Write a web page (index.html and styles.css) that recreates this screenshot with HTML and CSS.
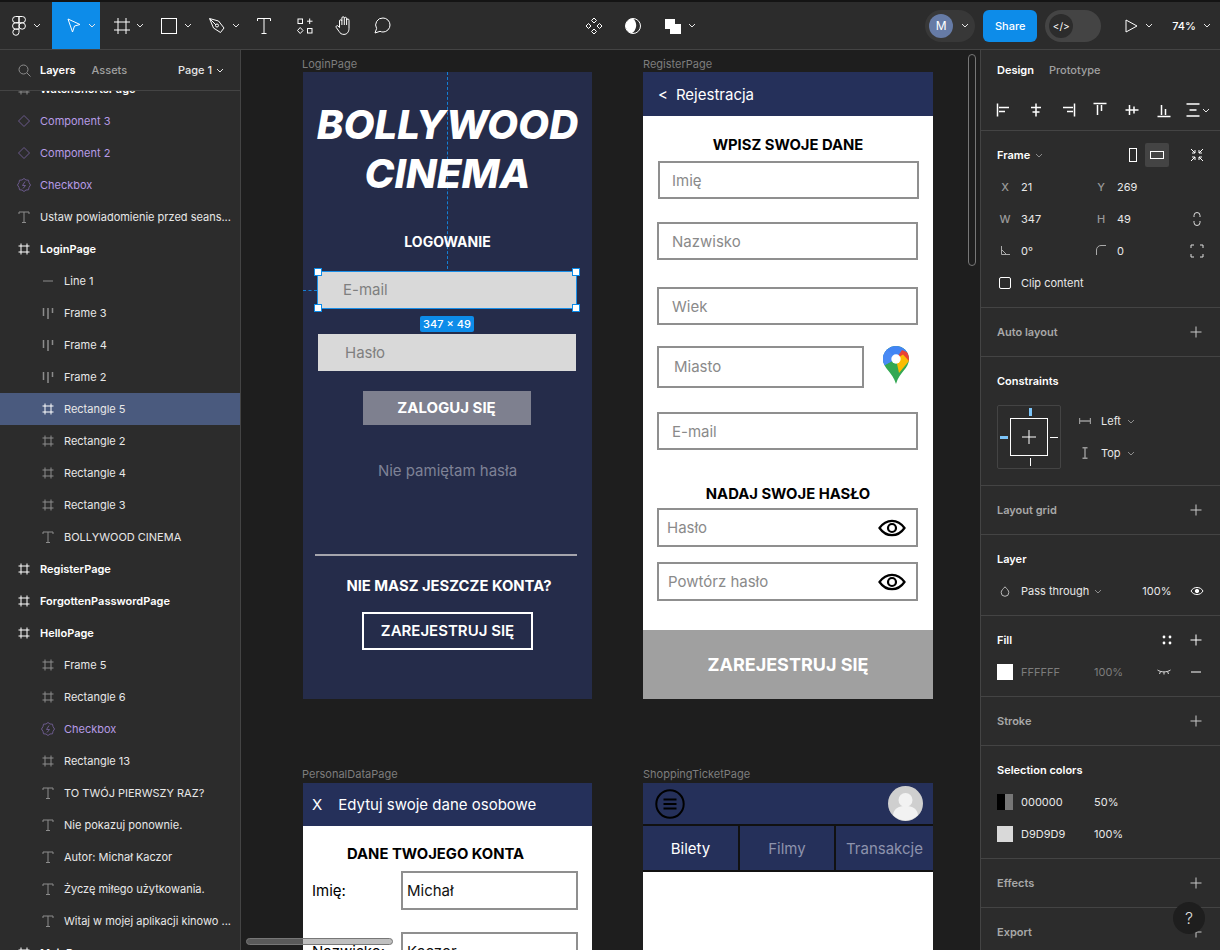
FILE: index.html
```html
<!DOCTYPE html>
<html lang="en">
<head>
    <meta charset="UTF-8">
    <title>Bollywood Cinema</title>
    <link rel="stylesheet" href="styles.css">
</head>
<body>
<svg class="sprite" xmlns="http://www.w3.org/2000/svg">
    <symbol id="chev" viewBox="0 0 8 5"><path d="M1 1l3 3 3-3" fill="none" stroke="currentColor"/></symbol>
    <symbol id="hash" viewBox="0 0 16 16"><path d="M5 2.5v11M11 2.5v11M2.5 5h11M2.5 11h11" fill="none" stroke="currentColor"/></symbol>
    <symbol id="text" viewBox="0 0 16 16"><path d="M3 5V3h10v2M8 3v10.5M6 13.5h4" fill="none" stroke="currentColor"/></symbol>
    <symbol id="comp" viewBox="0 0 16 16"><path d="M8 2.5L13.5 8 8 13.500 2.500 8z" fill="none" stroke="currentColor"/></symbol>
    <symbol id="inst" viewBox="0 0 16 16"><path d="M8 1.500l2 1.500 2.500.2.500 2.400 1.500 2.400-1.500 2.400-.5 2.400-2.500.2-2 1.500-2-1.500-2.500-.2-.5-2.400L1.500 8 3 5.600l.5-2.400L6 3z" fill="none" stroke="currentColor"/><path d="M9 4.500L6.500 8.500h3L7 11.500" fill="none" stroke="currentColor"/></symbol>
    <symbol id="line" viewBox="0 0 16 16"><path d="M3 8h10" stroke="currentColor" stroke-width="1"/></symbol>
    <symbol id="bars" viewBox="0 0 16 16"><path d="M3.500 3v8M8 3v11M12.500 3v5" stroke="currentColor" stroke-width="1.500"/></symbol>
    <symbol id="plus" viewBox="0 0 16 16"><path d="M8 2.500v11M2.500 8h11" stroke="currentColor"/></symbol>
    <symbol id="eye" viewBox="0 0 28 18"><path d="M1.500 9C5 4 9 1.800 14 1.800S23 4 26.500 9C23 14 19 16.200 14 16.200S5 14 1.500 9z" fill="none" stroke="#000" stroke-width="2.200"/><circle cx="14" cy="9" r="4" fill="none" stroke="#000" stroke-width="2.200"/></symbol>
</svg>

<div class="app">
    <header class="toolbar">
        <div class="tool tool-logo">
            <svg width="14" height="20" viewBox="0 0 14 20" fill="none" stroke="#fff"><path d="M7 .5H3.700a3 3 0 0 0 0 6.300H7zM7 .5h3.300a3 3 0 0 1 0 6.300H7zM7 6.800H3.700a3.100 3.100 0 0 0 0 6.300H7zM7 13.100H3.700A3.100 3.100 0 1 0 7 16.300z"/><circle cx="10.200" cy="10" r="3.200"/></svg>
            <svg class="chev"><use href="#chev"/></svg>
        </div>
        <div class="tool tool-active">
            <svg width="14" height="15" viewBox="0 0 14 15" fill="none" stroke="#fff"><path d="M1 1l12 5.500-5.500 1.500L5.500 14z"/></svg>
            <svg class="chev"><use href="#chev"/></svg>
        </div>
        <div class="tool">
            <svg width="16" height="16" viewBox="0 0 16 16" fill="none" stroke="#fff"><path d="M4 0v16M12 0v16M0 4h16M0 12h16"/></svg>
            <svg class="chev"><use href="#chev"/></svg>
        </div>
        <div class="tool tool-wide">
            <svg width="16" height="16" viewBox="0 0 16 16" fill="none" stroke="#fff"><rect x=".5" y=".5" width="15" height="15"/></svg>
            <svg class="chev"><use href="#chev"/></svg>
        </div>
        <div class="tool tool-wide">
            <svg width="16" height="16" viewBox="0 0 16 16" fill="none" stroke="#fff"><path d="M.5.500l9 2.500 5.500 7-3.500 4.500-7-4.500zM1 1l6 6"/><circle cx="8" cy="7.500" r="1.500"/></svg>
            <svg class="chev"><use href="#chev"/></svg>
        </div>
        <div class="tool tool-plain tool-t">
            <svg width="14" height="16" viewBox="0 0 14 16" fill="none" stroke="#fff"><path d="M.5 3V.5h13V3M7 .5v15M4.500 15.500h5"/></svg>
        </div>
        <div class="tool tool-plain">
            <svg width="16" height="16" viewBox="0 0 16 16" fill="none" stroke="#fff"><rect x="1" y="1" width="4.500" height="4.500"/><rect x="10.500" y="10.500" width="4.500" height="4.500"/><path d="M3.200 9.500l2.800 3-2.800 3-2.700-3zM12.700 .5v5.500M10 3.200h5.500"/></svg>
        </div>
        <div class="tool tool-plain">
            <svg width="18" height="19" viewBox="0 0 18 19" fill="none" stroke="#fff"><path d="M4.500 11.500V5a1.200 1.200 0 0 1 2.400 0V2a1.200 1.200 0 0 1 2.400 0v0a1.200 1.200 0 0 1 2.300.5V4a1.200 1.200 0 0 1 2.400.4v8c0 3.500-2 6-5 6-2.500 0-3.800-1-5-3l-2.800-4a1.200 1.200 0 0 1 1.800-1.500zM6.900 5v4M9.300 2v7M11.600 2.500V9"/></svg>
        </div>
        <div class="tool tool-plain">
            <svg width="17" height="17" viewBox="0 0 17 17" fill="none" stroke="#fff"><path d="M9 1a7 7 0 0 1 0 14 7 7 0 0 1-3-.7L1 16l1.600-4.500A7 7 0 0 1 9 1z"/></svg>
        </div>

        <div class="center-tools">
            <svg width="18" height="18" viewBox="0 0 18 18" fill="none" stroke="#fff"><path d="M9 1l2.500 2.500L9 6 6.500 3.500zM9 12l2.500 2.500L9 17l-2.500-2.500zM3.500 6.500L6 9l-2.500 2.500L1 9zM14.500 6.500L17 9l-2.500 2.500L12 9z"/></svg>
            <svg width="16" height="16" viewBox="0 0 16 16"><circle cx="8" cy="8" r="7.500" fill="none" stroke="#fff"/><path d="M8 .5a7.500 7.500 0 0 0-1.500 14.800A9 9 0 0 0 8 .5z" fill="#fff"/></svg>
            <div class="swatches">
                <svg width="16" height="16" viewBox="0 0 16 16" fill="#fff"><path d="M0 1h10v5h6v10H5v-5H0z"/></svg>
                <svg class="chev"><use href="#chev"/></svg>
            </div>
        </div>

        <div class="right-tools">
            <div class="user-pill"><span class="avatar">M</span><svg class="chev"><use href="#chev"/></svg></div>
            <button class="share">Share</button>
            <div class="dev-toggle"><span class="dev-knob">&lt;/&gt;</span></div>
            <div class="play">
                <svg width="13" height="14" viewBox="0 0 13 14" fill="none" stroke="#fff"><path d="M1 1l11 6-11 6z"/></svg>
                <svg class="chev"><use href="#chev"/></svg>
            </div>
            <div class="zoom-val">74%<svg class="chev"><use href="#chev"/></svg></div>
        </div>
    </header>

    <div class="main">
        <aside class="layers">
            <div class="layers-head">
                <svg class="search" width="13" height="13" viewBox="0 0 13 13" fill="none" stroke="#8c8c8c"><circle cx="5.500" cy="5.500" r="4.500"/><path d="M9 9l3.500 3.500"/></svg>
                <span class="tab-on">Layers</span>
                <span class="tab-off">Assets</span>
                <span class="page-name">Page 1<svg class="chev"><use href="#chev"/></svg></span>
            </div>
            <div class="layer-list">
                <div class="layer layer-first strong"><svg><use href="#hash"/></svg>WatchShortsPage</div>
                <div class="layer purple"><svg><use href="#comp"/></svg>Component 3</div>
                <div class="layer purple"><svg><use href="#comp"/></svg>Component 2</div>
                <div class="layer purple"><svg><use href="#inst"/></svg>Checkbox</div>
                <div class="layer"><svg><use href="#text"/></svg>Ustaw powiadomienie przed seans...</div>
                <div class="layer strong"><svg class="white"><use href="#hash"/></svg>LoginPage</div>
                <div class="layer sub"><svg><use href="#line"/></svg>Line 1</div>
                <div class="layer sub"><svg><use href="#bars"/></svg>Frame 3</div>
                <div class="layer sub"><svg><use href="#bars"/></svg>Frame 4</div>
                <div class="layer sub"><svg><use href="#bars"/></svg>Frame 2</div>
                <div class="layer sub selected"><svg class="white"><use href="#hash"/></svg>Rectangle 5</div>
                <div class="layer sub"><svg><use href="#hash"/></svg>Rectangle 2</div>
                <div class="layer sub"><svg><use href="#hash"/></svg>Rectangle 4</div>
                <div class="layer sub"><svg><use href="#hash"/></svg>Rectangle 3</div>
                <div class="layer sub"><svg><use href="#text"/></svg>BOLLYWOOD CINEMA</div>
                <div class="layer strong"><svg class="white"><use href="#hash"/></svg>RegisterPage</div>
                <div class="layer strong"><svg class="white"><use href="#hash"/></svg>ForgottenPasswordPage</div>
                <div class="layer strong"><svg class="white"><use href="#hash"/></svg>HelloPage</div>
                <div class="layer sub"><svg><use href="#hash"/></svg>Frame 5</div>
                <div class="layer sub"><svg><use href="#hash"/></svg>Rectangle 6</div>
                <div class="layer sub purple"><svg><use href="#inst"/></svg>Checkbox</div>
                <div class="layer sub"><svg><use href="#hash"/></svg>Rectangle 13</div>
                <div class="layer sub"><svg><use href="#text"/></svg>TO TWÓJ PIERWSZY RAZ?</div>
                <div class="layer sub"><svg><use href="#text"/></svg>Nie pokazuj ponownie.</div>
                <div class="layer sub"><svg><use href="#text"/></svg>Autor: Michał Kaczor</div>
                <div class="layer sub"><svg><use href="#text"/></svg>Życzę miłego użytkowania.</div>
                <div class="layer sub"><svg><use href="#text"/></svg>Witaj w mojej aplikacji kinowo ...</div>
                <div class="layer strong"><svg class="white"><use href="#hash"/></svg>MainPage</div>
            </div>
        </aside>

        <section class="canvas">
            <div class="frame-label label-login">LoginPage</div>
            <div class="frame login">
                <div class="guide-v"></div>
                <div class="guide-h"></div>
                <h1 class="login-title">BOLLYWOOD<br>CINEMA</h1>
                <h2 class="login-head">LOGOWANIE</h2>
                <div class="login-field email">E-mail</div>
                <div class="login-field pass">Hasło</div>
                <div class="login-btn">ZALOGUJ SIĘ</div>
                <div class="forgot">Nie pamiętam hasła</div>
                <div class="login-line"></div>
                <div class="no-account">NIE MASZ JESZCZE KONTA?</div>
                <div class="outline-btn">ZAREJESTRUJ SIĘ</div>

                <div class="selection">
                    <i class="handle tl"></i><i class="handle tr"></i><i class="handle bl"></i><i class="handle br"></i>
                </div>
                <div class="size-tag">347 × 49</div>
            </div>

            <div class="frame-label label-register">RegisterPage</div>
            <div class="frame register">
                <div class="bar reg-bar"><span class="reg-back">&lt;</span>Rejestracja</div>
                <h2 class="reg-head first">WPISZ SWOJE DANE</h2>
                <div class="field f-imie">Imię</div>
                <div class="field f-nazwisko">Nazwisko</div>
                <div class="field f-wiek">Wiek</div>
                <div class="miasto-row">
                    <div class="field f-miasto">Miasto</div>
                    <svg class="pin" width="26" height="38" viewBox="0 0 26 38">
                        <clipPath id="pin-clip"><path d="M13 0C5.800 0 0 5.800 0 13c0 9.500 9.500 13 13 25 3.500-12 13-15.500 13-25C26 5.800 20.200 0 13 0z"/></clipPath>
                        <g clip-path="url(#pin-clip)">
                            <rect width="26" height="38" fill="#34a853"/>
                            <path d="M0 0h9l4 13-13 7z" fill="#4285f4"/>
                            <path d="M3 2L13 13 0 20V6z" fill="#4a8af4"/>
                            <path d="M6 0h20v8L13 13z" fill="#4285f4"/>
                            <path d="M19 4l7 3v8l-6 3-7-5z" fill="#ea4335"/>
                            <path d="M20 8.500l6 6.500-10 12-3-14z" fill="#fbbc04"/>
                            <circle cx="13" cy="13" r="4.700" fill="#fff"/>
                        </g>
                    </svg>
                </div>
                <div class="field f-email">E-mail</div>
                <h2 class="reg-head second">NADAJ SWOJE HASŁO</h2>
                <div class="field f-pass">Hasło<svg class="eye"><use href="#eye"/></svg></div>
                <div class="field f-pass2">Powtórz hasło<svg class="eye"><use href="#eye"/></svg></div>
                <div class="reg-footer">ZAREJESTRUJ SIĘ</div>
            </div>

            <div class="frame-label label-personal">PersonalDataPage</div>
            <div class="frame personal">
                <div class="bar pers-bar"><span class="pers-x">X</span>Edytuj swoje dane osobowe</div>
                <h2 class="pers-head">DANE TWOJEGO KONTA</h2>
                <div class="pers-row r1"><span>Imię:</span><div class="pers-box">Michał</div></div>
                <div class="pers-row r2"><span>Nazwisko:</span><div class="pers-box">Kaczor</div></div>
            </div>

            <div class="frame-label label-ticket">ShoppingTicketPage</div>
            <div class="frame ticket">
                <div class="ticket-bar">
                    <svg width="30" height="30" viewBox="0 0 30 30" fill="none" stroke="#000"><circle cx="15" cy="15" r="13.700" stroke-width="2"/><path d="M8.500 10.500h13M8.500 15h13M8.500 19.500h13" stroke-width="2.200"/></svg>
                    <svg class="user-pic" width="35" height="35" viewBox="0 0 35 35"><circle cx="17.500" cy="17.500" r="17.500" fill="#cfcfcf"/><circle cx="17.500" cy="14" r="7" fill="#f2f2f2"/><path d="M5 29c1-7 6-9 12.500-9S29 22 30 29a17 17 0 0 1-25 0z" fill="#f2f2f2"/></svg>
                </div>
                <div class="ticket-tabs">
                    <div class="ticket-tab on">Bilety</div>
                    <div class="ticket-tab">Filmy</div>
                    <div class="ticket-tab">Transakcje</div>
                </div>
            </div>

            <div class="scroll-v"></div>
            <div class="scroll-h"></div>
        </section>

        <aside class="props">
            <div class="props-tabs"><span class="tab-on">Design</span><span class="tab-off">Prototype</span></div>
            <div class="align-row">
                <svg width="16" height="16" viewBox="0 0 16 16" stroke="#fff" fill="none"><path d="M1.500 1.500v13M3 5.500h10M3 9.500h6" stroke-width="1.500"/></svg>
                <svg width="16" height="16" viewBox="0 0 16 16" stroke="#fff" fill="none"><path d="M8 1.500v13M3 5.500h10M4.500 10h7" stroke-width="1.500"/></svg>
                <svg width="16" height="16" viewBox="0 0 16 16" stroke="#fff" fill="none"><path d="M14.500 1.500v13M3 5.500h10M7 9.500h6" stroke-width="1.500"/></svg>
                <svg width="16" height="16" viewBox="0 0 16 16" stroke="#fff" fill="none"><path d="M1.500 1.500h13M5.500 3v10M9.500 3v6" stroke-width="1.500"/></svg>
                <svg width="16" height="16" viewBox="0 0 16 16" stroke="#fff" fill="none"><path d="M1.500 8h13M5.500 3v10M10 4.500v7" stroke-width="1.500"/></svg>
                <svg width="16" height="16" viewBox="0 0 16 16" stroke="#fff" fill="none"><path d="M1.500 14.500h13M5.500 3v10M9.500 7v6" stroke-width="1.500"/></svg>
                <span class="dist">
                    <svg width="16" height="16" viewBox="0 0 16 16" stroke="#fff" fill="none"><path d="M1.500 2h13M1.500 14h13M4.500 8h7" stroke-width="1.500"/></svg>
                    <svg class="chev"><use href="#chev"/></svg>
                </span>
            </div>

            <div class="sec">
                <div class="row">
                    <span class="title">Frame</span><svg class="chev dim"><use href="#chev"/></svg>
                    <div class="orient">
                        <svg width="8" height="14" viewBox="0 0 8 14" fill="none" stroke="#fff"><rect x=".5" y=".5" width="7" height="13"/></svg>
                        <span class="orient-on"><svg width="14" height="8" viewBox="0 0 14 8" fill="none" stroke="#fff"><rect x=".5" y=".5" width="13" height="7"/></svg></span>
                    </div>
                    <svg class="end" width="14" height="14" viewBox="0 0 14 14" fill="none" stroke="#fff"><path d="M1 1l4 4M5 2v3H2M13 1L9 5M9 2v3h3M1 13l4-4M5 12V9H2M13 13L9 9M9 12V9h3"/></svg>
                </div>
                <div class="row"><div class="col"><b>X</b>21</div><div class="col"><b>Y</b>269</div></div>
                <div class="row"><div class="col"><b>W</b>347</div><div class="col"><b>H</b>49</div>
                    <svg class="end" width="14" height="14" viewBox="0 0 14 14" fill="none" stroke="#ddd"><path d="M4 5V3.500a3 3 0 0 1 6 0V5M4 9v1.500a3 3 0 0 0 6 0V9"/></svg>
                </div>
                <div class="row"><div class="col"><b><svg width="9" height="9" viewBox="0 0 9 9" fill="none" stroke="#aaa"><path d="M.5 0v8.500H9M.5 3.500l5 5"/></svg></b>0°</div>
                    <div class="col"><b><svg width="10" height="10" viewBox="0 0 10 10" fill="none" stroke="#aaa"><path d="M.5 10V5A4.500 4.500 0 0 1 5 .5h5"/></svg></b>0</div>
                    <svg class="end" width="14" height="14" viewBox="0 0 14 14" fill="none" stroke="#ddd"><path d="M1 4V1h3M10 1h3v3M13 10v3h-3M4 13H1v-3"/></svg>
                </div>
                <div class="row"><span class="check"></span>Clip content</div>
            </div>

            <div class="sec"><div class="row"><span class="title off">Auto layout</span><svg class="end plus"><use href="#plus"/></svg></div></div>

            <div class="sec sec-constraints">
                <div class="row"><span class="title">Constraints</span></div>
                <div class="con-wrap">
                    <div class="con-box">
                        <div class="con-inner"><svg width="14" height="14" viewBox="0 0 14 14" stroke="#fff"><path d="M7 0v14M0 7h14"/></svg></div>
                        <i class="tick t-top"></i><i class="tick t-left"></i><i class="tick t-right"></i><i class="tick t-bottom"></i>
                    </div>
                    <div class="con-opts">
                        <div class="con-opt"><svg width="12" height="8" viewBox="0 0 12 8" stroke="#999" fill="none"><path d="M.5 1v6M11.500 1v6M1 4h10" stroke-width="1.400"/></svg>Left<svg class="chev dim"><use href="#chev"/></svg></div>
                        <div class="con-opt"><svg width="12" height="12" viewBox="0 0 12 12" stroke="#999" fill="none"><path d="M3.500.7h5M3.500 11.300h5M6 1v10" stroke-width="1.400"/></svg>Top<svg class="chev dim"><use href="#chev"/></svg></div>
                    </div>
                </div>
            </div>

            <div class="sec"><div class="row"><span class="title off">Layout grid</span><svg class="end plus"><use href="#plus"/></svg></div></div>

            <div class="sec">
                <div class="row"><span class="title">Layer</span></div>
                <div class="row">
                    <svg class="lead" width="10" height="11" viewBox="0 0 10 11" fill="none" stroke="#bbb"><path d="M5 .8c2 2.200 3.800 3.700 3.800 5.700a3.800 3.800 0 0 1-7.600 0C1.200 4.500 3 3 5 .8z"/></svg>
                    Pass through<svg class="chev dim"><use href="#chev"/></svg>
                    <span class="opacity">100%</span>
                    <svg class="end" width="14" height="14" viewBox="0 0 14 14" fill="none" stroke="#fff"><path d="M1 7c1.500-2.500 3.500-3.500 6-3.500S11.500 4.500 13 7c-1.500 2.500-3.500 3.500-6 3.500S2.500 9.500 1 7z"/><circle cx="7" cy="7" r="1.700" fill="#fff"/></svg>
                </div>
            </div>

            <div class="sec">
                <div class="row"><span class="title">Fill</span>
                    <svg class="styles" width="10" height="10" viewBox="0 0 10 10" fill="#fff"><circle cx="2" cy="2" r="1.400"/><circle cx="8" cy="2" r="1.400"/><circle cx="2" cy="8" r="1.400"/><circle cx="8" cy="8" r="1.400"/></svg>
                    <svg class="end plus bright"><use href="#plus"/></svg></div>
                <div class="row dimmed"><span class="swatch white-sw"></span><span class="hex">FFFFFF</span>100%
                    <svg class="styles lash" width="14" height="6" viewBox="0 0 14 6" fill="none" stroke="#ddd"><path d="M.5 1C4 3.500 10 3.500 13.500 1M3.500 2.500L2.500 5M7 3v2.500M10.500 2.500l1 2.500"/></svg>
                    <svg class="end plus bright"><use href="#line"/></svg></div>
            </div>

            <div class="sec"><div class="row"><span class="title off">Stroke</span><svg class="end plus"><use href="#plus"/></svg></div></div>

            <div class="sec">
                <div class="row"><span class="title">Selection colors</span></div>
                <div class="row"><span class="swatch half-sw"></span><span class="hex">000000</span>50%</div>
                <div class="row"><span class="swatch grey-sw"></span><span class="hex">D9D9D9</span>100%</div>
            </div>

            <div class="sec"><div class="row"><span class="title off">Effects</span><svg class="end plus"><use href="#plus"/></svg></div></div>
            <div class="sec"><div class="row"><span class="title off">Export</span><svg class="end plus"><use href="#plus"/></svg></div></div>

            <div class="help">?</div>
        </aside>
    </div>
</div>
</body>
</html>
```

FILE: styles.css
```css
*{
    margin: 0;
    padding: 0;
    box-sizing: border-box;
}
html,body{
    width: 1220px;
    height: 950px;
    overflow: hidden;
}
body{
    background: #1e1e1e;
    color: #fff;
    font-family: Inter, "Liberation Sans", sans-serif;
    font-size: 11px;
}
.sprite{
    display: none;
}
.chev{
    width: 8px;
    height: 5px;
    color: #e6e6e6;
    flex: none;
}
.chev.dim{
    color: #8c8c8c;
}
.app{
    width: 1220px;
    height: 950px;
    display: flex;
    flex-direction: column;
}

/* toolbar */
.toolbar{
    height: 50px;
    flex: none;
    background: #2c2c2c;
    border-top: 2px solid #141414;
    border-bottom: 1px solid #444;
    display: flex;
    align-items: stretch;
}
.tool{
    width: 48px;
    height: 47px;
    display: flex;
    align-items: center;
    gap: 6px;
    padding-left: 14px;
}
.tool-wide{
    gap: 7px;
    padding-left: 13px;
}
.tool-logo{
    width: 52px;
    gap: 7px;
    padding-left: 12px;
}
.tool-active{
    background: #0d8ce9;
    gap: 7px;
    padding-left: 15px;
}
.tool-plain{
    width: 39px;
    justify-content: center;
    padding-left: 0;
}
.tool-t{
    width: 40px;
    margin-right: 1px;
}
.center-tools{
    margin-left: 183px;
    display: flex;
    align-items: center;
    gap: 22px;
}
.swatches{
    display: flex;
    align-items: center;
    gap: 7px;
    margin-left: 2px;
}
.right-tools{
    margin-left: auto;
    display: flex;
    align-items: center;
    padding-right: 9px;
}
.user-pill{
    width: 50px;
    height: 32px;
    border-radius: 16px;
    background: #383838;
    display: flex;
    align-items: center;
    gap: 8px;
    padding-left: 4px;
}
.avatar{
    width: 24px;
    height: 24px;
    border-radius: 50%;
    background: #667ba6;
    font-size: 12px;
    line-height: 24px;
    text-align: center;
}
.share{
    width: 54px;
    height: 32px;
    margin-left: 8px;
    border: 0;
    border-radius: 6px;
    background: #0d8ce9;
    color: #fff;
    font: 500 11px Inter, sans-serif;
}
.dev-toggle{
    width: 56px;
    height: 32px;
    margin-left: 8px;
    border-radius: 16px;
    background: #444;
    padding: 4px;
}
.dev-knob{
    display: block;
    width: 24px;
    height: 24px;
    border-radius: 50%;
    background: #2c2c2c;
    font-size: 10px;
    line-height: 24px;
    text-align: center;
}
.play{
    display: flex;
    align-items: center;
    gap: 7px;
    margin-left: 24px;
}
.zoom-val{
    display: flex;
    align-items: center;
    gap: 7px;
    margin-left: 19px;
    font-weight: 500;
}

/* main columns */
.main{
    flex: 1;
    display: grid;
    grid-template-columns: 241px 1fr 240px;
    min-height: 0;
}

/* layers panel */
.layers{
    background: #2c2c2c;
    border-right: 1px solid #444;
    overflow: hidden;
}
.layers-head{
    height: 41px;
    border-bottom: 1px solid #444;
    display: flex;
    align-items: center;
    padding: 0 16px 0 18px;
    position: relative;
    z-index: 1;
    background: #2c2c2c;
}
.search{
    margin-right: 9px;
}
.tab-on{
    font-weight: 600;
    color: #fff;
}
.tab-off{
    font-weight: 500;
    color: #a0a0a0;
}
.layers-head .tab-off{
    margin-left: 16px;
}
.page-name{
    margin-left: auto;
    display: flex;
    align-items: center;
    gap: 4px;
    color: #e6e6e6;
    font-weight: 500;
}
.layer{
    height: 32px;
    display: flex;
    align-items: center;
    gap: 8px;
    padding-left: 16px;
    color: #e8e8e8;
    white-space: nowrap;
}
.layer-first{
    margin-top: -18px;
}
.layer svg{
    width: 16px;
    height: 16px;
    flex: none;
    color: #8c8c8c;
}
.layer svg.white{
    color: #fff;
}
.layer.strong{
    font-weight: 600;
    color: #fff;
}
.layer.sub{
    padding-left: 40px;
}
.layer.purple{
    color: #b79be6;
}
.layer.purple svg{
    color: #6b5a8c;
}
.layer.selected{
    background: #4a5a7e;
}

/* canvas */
.canvas{
    position: relative;
    background: #1e1e1e;
    overflow: hidden;
}
.frame-label{
    position: absolute;
    color: #7d7d7d;
    font-size: 11px;
    line-height: 14px;
}
.label-login{
    left: 61px;
    top: 7px;
}
.label-register{
    left: 402px;
    top: 7px;
}
.label-personal{
    left: 61px;
    top: 717px;
}
.label-ticket{
    left: 402px;
    top: 717px;
}
.frame{
    position: absolute;
}
.login{
    left: 62px;
    top: 22px;
    width: 289px;
    height: 627px;
    background: #252c4a;
    display: flex;
    flex-direction: column;
    align-items: center;
    padding-top: 28px;
}
.login-title{
    position: relative;
    font-size: 40.200px;
    line-height: 49px;
    font-weight: 800;
    font-style: italic;
    text-align: center;
    white-space: nowrap;
}
.login-head{
    margin-top: 35px;
    font-size: 14px;
    line-height: 18px;
    font-weight: 700;
    position: relative;
}
.login-field{
    align-self: flex-start;
    margin-left: 15px;
    width: 258px;
    background: #d9d9d9;
    color: #7f7f7f;
    font-size: 15px;
    display: flex;
    align-items: center;
}
.login-field.email{
    height: 37px;
    margin-top: 20px;
    padding-left: 25px;
}
.login-field.pass{
    height: 37px;
    margin-top: 26px;
    padding-left: 27px;
}
.login-btn{
    margin: 20px 2px 0 0;
    width: 168px;
    height: 34px;
    background: #7e808f;
    font-size: 15px;
    font-weight: 700;
    line-height: 34px;
    text-align: center;
}
.forgot{
    margin-top: 37px;
    color: #7e8296;
    font-size: 15px;
    line-height: 18px;
}
.login-line{
    margin: 74px 4px 0 0;
    width: 262px;
    height: 2px;
    background: #a5a5ad;
}
.no-account{
    margin: 21px 0 0 3px;
    font-size: 14.800px;
    font-weight: 700;
    line-height: 18px;
}
.outline-btn{
    margin-top: 17px;
    width: 171px;
    height: 38px;
    border: 2px solid #fff;
    font-size: 15px;
    font-weight: 600;
    line-height: 34px;
    text-align: center;
}
.selection{
    position: absolute;
    left: 14px;
    top: 199px;
    width: 260px;
    height: 38px;
    border: 1px solid #1a8fe8;
}
.handle{
    position: absolute;
    width: 8px;
    height: 8px;
    background: #fff;
    border: 1px solid #0d8ce9;
}
.handle.tl{
    left: -4px;
    top: -4px;
}
.handle.tr{
    right: -4px;
    top: -4px;
}
.handle.bl{
    left: -4px;
    bottom: -4px;
}
.handle.br{
    right: -4px;
    bottom: -4px;
}
.guide-v{
    position: absolute;
    left: 144px;
    top: 0;
    height: 197px;
    border-left: 1px dashed #1480d6;
}
.guide-h{
    position: absolute;
    left: 0;
    top: 218px;
    width: 14px;
    border-top: 1px dashed #1480d6;
}
.size-tag{
    position: absolute;
    left: 117px;
    top: 244px;
    width: 54px;
    height: 16px;
    border-radius: 2px;
    background: #0d8ce9;
    font-size: 11px;
    font-weight: 500;
    line-height: 16px;
    text-align: center;
}

/* register frame */
.register{
    left: 402px;
    top: 22px;
    width: 290px;
    height: 627px;
    background: #fff;
    color: #000;
    display: flex;
    flex-direction: column;
}
.bar{
    height: 44px;
    flex: none;
    background: #25305a;
    color: #fff;
    font-size: 15px;
    display: flex;
    align-items: center;
}
.reg-bar{
    padding-left: 15px;
}
.reg-back{
    margin-right: 8px;
}
.reg-head{
    font-size: 14.800px;
    line-height: 18px;
    font-weight: 700;
    text-align: center;
}
.reg-head.first{
    margin-top: 20px;
}
.reg-head.second{
    margin-top: 35px;
}
.field{
    flex: none;
    height: 38px;
    width: 261px;
    margin-left: 14px;
    border: 2px solid #8f8f8f;
    color: #8a8a8a;
    font-size: 15px;
    display: flex;
    align-items: center;
    padding-left: 13px;
}
.f-imie{
    margin-top: 7px;
    margin-left: 15px;
    padding-left: 12px;
}
.f-nazwisko{
    margin-top: 23px;
}
.f-wiek{
    margin-top: 27px;
}
.miasto-row{
    margin-top: 21px;
    display: flex;
    align-items: flex-start;
}
.f-miasto{
    width: 207px;
    height: 42px;
    padding: 0 0 2px 15px;
}
.pin{
    margin-left: 19px;
}
.f-email{
    margin-top: 24px;
}
.f-pass{
    height: 39px;
    margin-top: 5px;
    padding-left: 8px;
}
.f-pass2{
    height: 39px;
    margin-top: 15px;
    padding-left: 9px;
}
.eye{
    width: 28px;
    height: 18px;
    margin-left: auto;
    margin-right: 10px;
}
.reg-footer{
    margin-top: auto;
    height: 69px;
    background: #a0a0a0;
    color: #fff;
    font-size: 18px;
    font-weight: 700;
    line-height: 69px;
    text-align: center;
}

/* personal data frame */
.personal{
    left: 62px;
    top: 733px;
    width: 289px;
    height: 200px;
    background: #fff;
    color: #000;
}
.pers-bar{
    height: 43px;
    padding-left: 9px;
    background: #25305a;
}
.pers-x{
    margin-right: 16px;
    font-size: 15px;
}
.pers-head{
    margin: 19px 0 0 44px;
    font-size: 14.800px;
    line-height: 18px;
    font-weight: 700;
}
.pers-row{
    display: flex;
    align-items: center;
    padding-left: 9px;
    font-size: 15px;
}
.pers-row span{
    width: 89px;
    flex: none;
}
.pers-row.r1{
    margin-top: 8px;
}
.pers-row.r2{
    margin-top: 22px;
}
.pers-box{
    width: 177px;
    height: 39px;
    border: 2px solid #8f8f8f;
    padding-left: 4px;
    line-height: 35px;
    color: #111;
}

/* ticket frame */
.ticket{
    left: 402px;
    top: 733px;
    width: 290px;
    height: 200px;
    background: #fff;
}
.ticket-bar{
    height: 43px;
    background: #25305a;
    border-bottom: 2px solid #111;
    display: flex;
    align-items: center;
    justify-content: space-between;
    padding: 0 10px 0 12px;
}
.ticket-tabs{
    display: grid;
    grid-template-columns: 97px 96px 1fr;
    height: 46px;
    background: #25305a;
    border-bottom: 2px solid #111;
}
.ticket-tab{
    border-right: 2px solid #111;
    color: #8d93ad;
    font-size: 15px;
    line-height: 45px;
    text-align: center;
}
.ticket-tab:last-child{
    border-right: 0;
}
.ticket-tab.on{
    color: #fff;
}

/* canvas scrollbars */
.scroll-v{
    position: absolute;
    left: 727px;
    top: 4px;
    width: 8px;
    height: 212px;
    border: 1px solid #777;
    border-radius: 4px;
    background: #1e1e1e;
}
.scroll-h{
    position: absolute;
    left: 5px;
    top: 888px;
    width: 147px;
    height: 7px;
    border: 1px solid #777;
    border-radius: 4px;
    background: rgba(140,140,140,.55);
}

/* properties panel */
.props{
    position: relative;
    background: #2c2c2c;
    border-left: 1px solid #444;
    overflow: hidden;
}
.props-tabs{
    height: 40px;
    padding-left: 16px;
    display: flex;
    align-items: center;
    gap: 15px;
}
.align-row{
    height: 40px;
    padding-left: 15px;
    display: flex;
    align-items: center;
    gap: 16px;
}
.dist{
    display: flex;
    align-items: center;
    gap: 1px;
    margin-left: -3px;
}
.sec{
    border-top: 1px solid #444;
    padding: 8px 0;
}
.row{
    height: 32px;
    padding: 0 16px;
    display: flex;
    align-items: center;
    color: #e8e8e8;
    white-space: nowrap;
}
.title{
    font-weight: 600;
    color: #fff;
}
.title.off{
    color: #a8a8a8;
}
.end{
    margin-left: auto;
    flex: none;
}
.plus{
    width: 16px;
    height: 16px;
    color: #c8c8c8;
}
.plus.bright{
    color: #fff;
    margin-left: 16px;
}
.orient{
    margin-left: 86px;
    display: flex;
    align-items: center;
    gap: 8px;
}
.orient-on{
    width: 24px;
    height: 24px;
    border-radius: 2px;
    background: #444;
    display: flex;
    align-items: center;
    justify-content: center;
}
.col{
    width: 96px;
    display: flex;
    align-items: center;
}
.col b{
    width: 16px;
    margin-right: 8px;
    flex: none;
    color: #999;
    font-weight: 500;
    text-align: center;
}
.check{
    width: 12px;
    height: 12px;
    margin: 0 10px 0 2px;
    border: 1px solid #fff;
    border-radius: 2px;
}
.sec-constraints{
    padding-bottom: 16px;
}
.con-wrap{
    margin-top: 8px;
    padding-left: 16px;
    display: flex;
    gap: 18px;
}
.con-box{
    position: relative;
    width: 64px;
    height: 64px;
    border: 1px solid #444;
    border-radius: 2px;
}
.con-inner{
    position: absolute;
    left: 12px;
    top: 12px;
    width: 38px;
    height: 38px;
    border: 1px solid #fff;
    display: flex;
    align-items: center;
    justify-content: center;
}
.tick{
    position: absolute;
    background: #fff;
}
.t-top{
    left: 31px;
    top: 2px;
    width: 3px;
    height: 8px;
    background: #7cc4f8;
}
.t-left{
    left: 2px;
    top: 30px;
    width: 8px;
    height: 3px;
    background: #7cc4f8;
}
.t-right{
    right: 2px;
    top: 31px;
    width: 8px;
    height: 1px;
}
.t-bottom{
    left: 32px;
    bottom: 2px;
    width: 1px;
    height: 8px;
}
.con-opt{
    height: 32px;
    display: flex;
    align-items: center;
    gap: 6px;
    color: #e8e8e8;
    width: 70px;
}
.con-opt svg:first-child{
    margin-right: 4px;
}
.lead{
    margin: 0 11px 0 3px;
    flex: none;
}
.row .chev.dim{
    margin-left: 5px;
}
.opacity{
    margin-left: 40px;
}
.styles{
    margin-left: auto;
    flex: none;
}
.styles + .end{
    margin-left: 16px;
}
.lash{
    margin-right: 1px;
}
.swatch{
    width: 16px;
    height: 16px;
    margin-right: 8px;
    flex: none;
}
.white-sw{
    background: #fff;
}
.grey-sw{
    background: #d9d9d9;
}
.half-sw{
    background: linear-gradient(90deg, #000 50%, #777 50%);
}
.hex{
    width: 73px;
}
.dimmed{
    color: #7d7d7d;
}
.help{
    position: absolute;
    left: 192px;
    top: 852px;
    width: 32px;
    height: 32px;
    border-radius: 50%;
    background: #1e1e1e;
    color: #ddd;
    font-size: 16px;
    font-weight: 300;
    line-height: 32px;
    text-align: center;
}
```
